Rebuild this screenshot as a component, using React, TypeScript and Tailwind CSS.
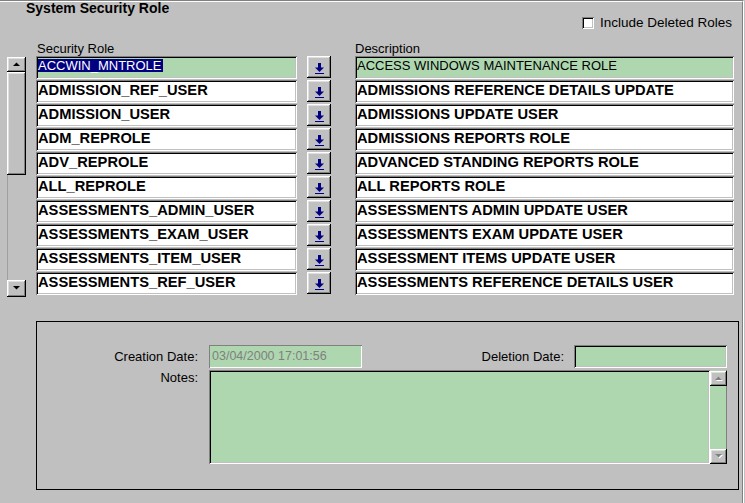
import React from "react";

const rows: [string, string][] = [
  ["ACCWIN_MNTROLE", "ACCESS WINDOWS MAINTENANCE ROLE"],
  ["ADMISSION_REF_USER", "ADMISSIONS REFERENCE DETAILS UPDATE"],
  ["ADMISSION_USER", "ADMISSIONS UPDATE USER"],
  ["ADM_REPROLE", "ADMISSIONS REPORTS ROLE"],
  ["ADV_REPROLE", "ADVANCED STANDING REPORTS ROLE"],
  ["ALL_REPROLE", "ALL REPORTS ROLE"],
  ["ASSESSMENTS_ADMIN_USER", "ASSESSMENTS ADMIN UPDATE USER"],
  ["ASSESSMENTS_EXAM_USER", "ASSESSMENTS EXAM UPDATE USER"],
  ["ASSESSMENTS_ITEM_USER", "ASSESSMENT ITEMS UPDATE USER"],
  ["ASSESSMENTS_REF_USER", "ASSESSMENTS REFERENCE DETAILS USER"],
];

const sunken =
  "shadow-[inset_1px_1px_#808080,inset_-1px_-1px_#ffffff,inset_2px_2px_#000000,inset_-2px_-2px_#c0c0c0]";
const raised =
  "shadow-[inset_-1px_-1px_#000000,inset_1px_1px_#ffffff,inset_-2px_-2px_#808080,inset_2px_2px_#dfdfdf]";

function DownGlyph() {
  return (
    <svg width="9" height="11" viewBox="0 0 9 11">
      <rect x="3" y="0" width="3" height="5" fill="#000080" />
      <polygon points="0,4.5 9,4.5 4.5,9" fill="#000080" />
      <rect x="0" y="10" width="9" height="1" fill="#000080" />
    </svg>
  );
}

function Tri({ up, disabled }: { up?: boolean; disabled?: boolean }) {
  const c = disabled ? "#808080" : "#000000";
  return (
    <svg width="8" height="5" viewBox="0 0 8 5">
      {disabled && (
        <polygon
          points={up ? "1,5 8,5 4.5,1.5" : "1,1 8,1 4.5,4.5"}
          fill="#ffffff"
        />
      )}
      <polygon points={up ? "0,4 7,4 3.5,0.5" : "0,0 7,0 3.5,3.5"} fill={c} />
    </svg>
  );
}

export default function App() {
  return (
    <div className="w-[745px] h-[503px] bg-[#c0c0c0] overflow-hidden font-['Liberation_Sans',Arial,sans-serif] text-black">
      <div className="w-[744px] h-[503px] border-t border-r border-t-[#808080] border-r-white">
        <div className="h-full border-t border-r border-t-white border-r-[#808080]">
          {/* Title */}
          <div className="-mt-px pl-[26px] text-[14px] leading-[14px] font-bold">
            System Security Role
          </div>

          {/* Checkbox */}
          <div className="mt-[2px] pl-[582px] flex items-center h-[12px]">
            <div className={`w-[12px] h-[12px] bg-white ${sunken}`} />
            <span className="ml-[6px] text-[13.5px] leading-[12px]">
              Include Deleted Roles
            </span>
          </div>

          {/* Column labels */}
          <div className="mt-[12px] flex text-[13px] leading-[15px]">
            <div className="pl-[37px] w-[355px]">Security Role</div>
            <div>Description</div>
          </div>

          {/* Rows */}
          <div className="flex pl-[7px]">
            <div className="mt-px w-[19px] h-[240px] flex flex-col">
              <div className={`h-[15px] flex items-center justify-center ${raised}`}>
                <Tri up />
              </div>
              <div className={`h-[103px] ${raised}`} />
              <div className="flex-1 border-l border-[#a0a0a0]" />
              <div className={`h-[17px] flex items-center justify-center ${raised}`}>
                <Tri />
              </div>
            </div>
            <div className="ml-[10px] flex flex-col gap-px">
              {rows.map(([role, desc], i) => {
                const first = i === 0;
                return (
                  <div key={role} className="flex h-[23px]">
                    <div
                      className={`w-[261px] h-[23px] ${sunken} ${
                        first ? "bg-[#aed7b0]" : "bg-white"
                      }`}
                    >
                      {first ? (
                        <div className="flex pt-[3px] pl-[2px]">
                          <span className="block bg-[#000080] text-white text-[13px] leading-[13px] h-[13px] pr-px">
                            {role}
                          </span>
                        </div>
                      ) : (
                        <div className="pt-[2px] pl-[2px] text-[14.7px] leading-[16px] font-bold whitespace-nowrap">
                          {role}
                        </div>
                      )}
                    </div>
                    <div
                      className={`ml-[10px] w-[24px] h-[22px] flex items-end justify-center pb-[4px] ${raised}`}
                    >
                      <DownGlyph />
                    </div>
                    <div
                      className={`ml-[24px] w-[379px] h-[23px] ${sunken} ${
                        first ? "bg-[#aed7b0]" : "bg-white"
                      }`}
                    >
                      {first ? (
                        <div className="pt-[3px] pl-[2px] text-[13px] leading-[13px] whitespace-nowrap">
                          {desc}
                        </div>
                      ) : (
                        <div className="pt-[2px] pl-[2px] text-[14.7px] leading-[16px] font-bold whitespace-nowrap">
                          {desc}
                        </div>
                      )}
                    </div>
                  </div>
                );
              })}
            </div>
          </div>

          {/* Detail panel */}
          <div className="mt-[24px] ml-[36px] w-[703px] h-[169px] border border-black">
            <div className="pt-[23px] text-[13px] leading-[15px]">
              <div className="flex items-center h-[23px]">
                <div className="w-[161px] text-right">Creation Date:</div>
                <div
                  className={`ml-[11px] w-[153px] h-[23px] bg-[#aed7b0] shadow-[inset_1px_1px_#808080,inset_-1px_-1px_#ffffff] pl-[3px] pt-[4px] text-[#808080] text-[12.5px] leading-[15px] whitespace-nowrap`}
                >
                  03/04/2000 17:01:56
                </div>
                <div className="w-[202px] text-right">Deletion Date:</div>
                <div className={`ml-[10px] w-[153px] h-[23px] bg-[#aed7b0] ${sunken}`} />
              </div>
              <div className="mt-[2px] flex">
                <div className="w-[161px] text-right">Notes:</div>
                <div className="ml-[11px] flex h-[94px]">
                  <div className={`w-[501px] h-[94px] bg-[#aed7b0] ${sunken}`} />
                  <div className="w-[17px] h-[94px] flex flex-col bg-[#aed7b0] shadow-[inset_-1px_0_#808080]">
                    <div className={`mt-px h-[15px] bg-[#c0c0c0] flex items-center justify-center ${raised}`}>
                      <Tri up disabled />
                    </div>
                    <div className="flex-1" />
                    <div className={`h-[15px] bg-[#c0c0c0] flex items-center justify-center ${raised}`}>
                      <Tri disabled />
                    </div>
                  </div>
                </div>
              </div>
            </div>
          </div>
        </div>
      </div>
    </div>
  );
}
